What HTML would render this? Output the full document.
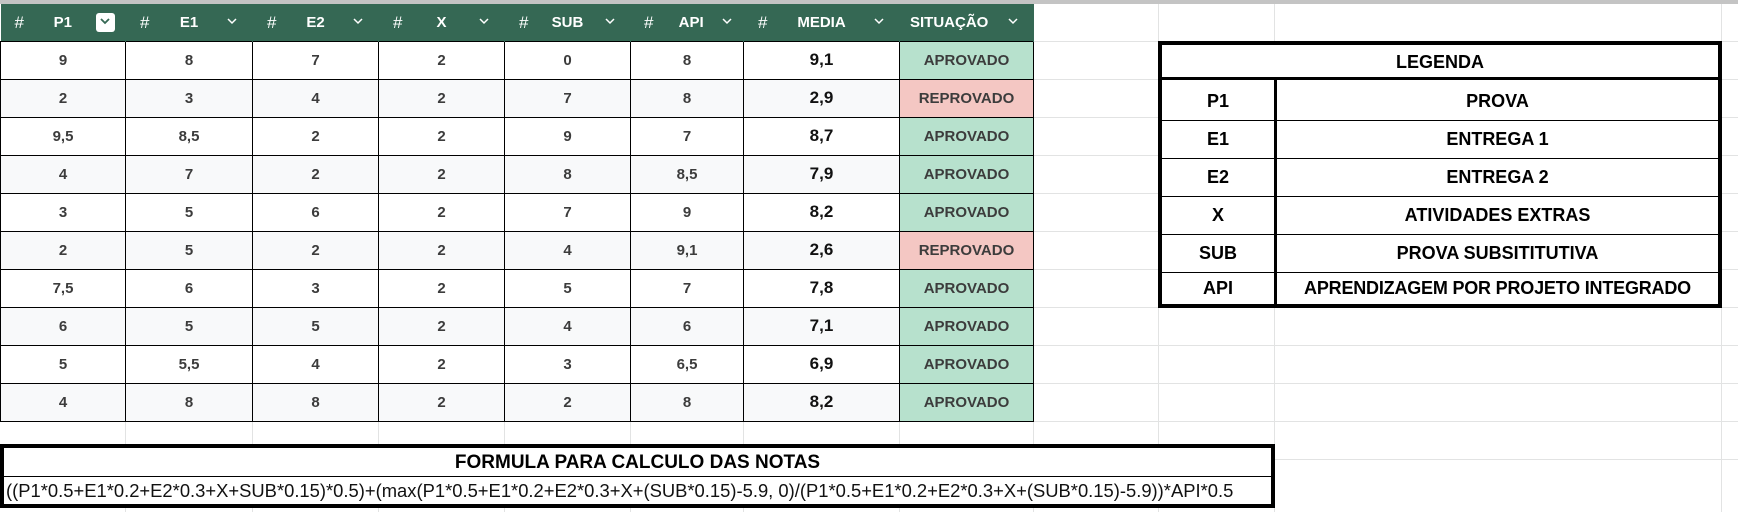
<!DOCTYPE html>
<html><head><meta charset="utf-8"><style>
*{margin:0;padding:0;box-sizing:border-box}
body{width:1738px;height:512px;overflow:hidden;background:#fff;position:relative;font-family:"Liberation Sans",Arial,sans-serif}
.gl{position:absolute;background:#e2e3e3}
.topbar{position:absolute;left:0;top:0;width:1738px;height:4px;background:#c4c4c4}
table.d{position:absolute;left:0;top:4px;border-collapse:collapse;table-layout:fixed}
table.d td{border:1px solid #000;height:38px;text-align:center;font-weight:bold;font-size:15px;color:#3c3c3c}
table.d tr:nth-child(odd) td{background:#f8f9fa}
table.d tr:nth-child(even) td{background:#fff}
table.d tr.h td{background:#356854;color:#fff;height:37px;border:none;border-right:1px solid #356854;position:relative;font-size:15px}
table.d td.a{background:#b7e1cd!important}
table.d td.r{background:#f4c7c3!important}
table.d td.m{font-size:17px;color:#111}
.hs{position:absolute;left:14px;top:9px;font-weight:normal;font-size:17px}
.ch{position:absolute;right:14px;top:12px;width:12px;height:10px}
.box{position:absolute;right:10px;top:9px;width:19px;height:19px;background:#fff;border-radius:3px}
.lg{position:absolute;left:1158px;top:41px;width:564px;height:267px;border:4px solid #000;background:#fff}
.lg div{position:absolute;font-weight:bold;font-size:18px;color:#000;text-align:center}
.fb{position:absolute;left:0;top:444px;width:1275px;height:64px;border:4px solid #000;background:#fff}
</style></head><body>
<div class="topbar"></div>
<div class="gl" style="left:1033px;top:41px;width:705px;height:1px"></div>
<div class="gl" style="left:1033px;top:79px;width:705px;height:1px"></div>
<div class="gl" style="left:1033px;top:117px;width:705px;height:1px"></div>
<div class="gl" style="left:1033px;top:155px;width:705px;height:1px"></div>
<div class="gl" style="left:1033px;top:193px;width:705px;height:1px"></div>
<div class="gl" style="left:1033px;top:231px;width:705px;height:1px"></div>
<div class="gl" style="left:1033px;top:269px;width:705px;height:1px"></div>
<div class="gl" style="left:1033px;top:307px;width:705px;height:1px"></div>
<div class="gl" style="left:1033px;top:345px;width:705px;height:1px"></div>
<div class="gl" style="left:1033px;top:383px;width:705px;height:1px"></div>
<div class="gl" style="left:1033px;top:421px;width:705px;height:1px"></div>
<div class="gl" style="left:1274px;top:459px;width:464px;height:1px"></div>
<div class="gl" style="left:1158px;top:4px;width:1px;height:508px"></div>
<div class="gl" style="left:1274px;top:4px;width:1px;height:508px"></div>
<div class="gl" style="left:1721px;top:4px;width:1px;height:508px"></div>
<div class="gl" style="left:125px;top:420px;width:1px;height:92px"></div>
<div class="gl" style="left:252px;top:420px;width:1px;height:92px"></div>
<div class="gl" style="left:378px;top:420px;width:1px;height:92px"></div>
<div class="gl" style="left:504px;top:420px;width:1px;height:92px"></div>
<div class="gl" style="left:630px;top:420px;width:1px;height:92px"></div>
<div class="gl" style="left:743px;top:420px;width:1px;height:92px"></div>
<div class="gl" style="left:899px;top:420px;width:1px;height:92px"></div>
<div class="gl" style="left:1033px;top:420px;width:1px;height:92px"></div>

<table class="d">
<colgroup><col style="width:125px"><col style="width:127px"><col style="width:126px"><col style="width:126px"><col style="width:126px"><col style="width:113px"><col style="width:156px"><col style="width:134px"></colgroup>
<tr class="h">
<td><span class="hs">#</span>P1<span class="box"></span><svg class="ch" style="right:14px" viewBox="0 0 12 10"><path d="M2 3l4 4 4-4" stroke="#356854" stroke-width="1.8" fill="none"/></svg></td>
<td><span class="hs">#</span>E1<svg class="ch" viewBox="0 0 12 10"><path d="M2 3l4 4 4-4" stroke="#fff" stroke-width="1.5" fill="none"/></svg></td>
<td><span class="hs">#</span>E2<svg class="ch" viewBox="0 0 12 10"><path d="M2 3l4 4 4-4" stroke="#fff" stroke-width="1.5" fill="none"/></svg></td>
<td><span class="hs">#</span>X<svg class="ch" viewBox="0 0 12 10"><path d="M2 3l4 4 4-4" stroke="#fff" stroke-width="1.5" fill="none"/></svg></td>
<td><span class="hs">#</span>SUB<svg class="ch" viewBox="0 0 12 10"><path d="M2 3l4 4 4-4" stroke="#fff" stroke-width="1.5" fill="none"/></svg></td>
<td><span class="hs" style="left:13px">#</span>&nbsp;&nbsp;API<svg class="ch" style="right:10px" viewBox="0 0 12 10"><path d="M2 3l4 4 4-4" stroke="#fff" stroke-width="1.5" fill="none"/></svg></td>
<td><span class="hs">#</span>MEDIA<svg class="ch" viewBox="0 0 12 10"><path d="M2 3l4 4 4-4" stroke="#fff" stroke-width="1.5" fill="none"/></svg></td>
<td style="text-align:left;padding-left:10px">SITUAÇÃO<svg class="ch" viewBox="0 0 12 10"><path d="M2 3l4 4 4-4" stroke="#fff" stroke-width="1.5" fill="none"/></svg></td>
</tr>
<tr><td>9</td><td>8</td><td>7</td><td>2</td><td>0</td><td>8</td><td class="m">9,1</td><td class="a">APROVADO</td></tr>
<tr><td>2</td><td>3</td><td>4</td><td>2</td><td>7</td><td>8</td><td class="m">2,9</td><td class="r">REPROVADO</td></tr>
<tr><td>9,5</td><td>8,5</td><td>2</td><td>2</td><td>9</td><td>7</td><td class="m">8,7</td><td class="a">APROVADO</td></tr>
<tr><td>4</td><td>7</td><td>2</td><td>2</td><td>8</td><td>8,5</td><td class="m">7,9</td><td class="a">APROVADO</td></tr>
<tr><td>3</td><td>5</td><td>6</td><td>2</td><td>7</td><td>9</td><td class="m">8,2</td><td class="a">APROVADO</td></tr>
<tr><td>2</td><td>5</td><td>2</td><td>2</td><td>4</td><td>9,1</td><td class="m">2,6</td><td class="r">REPROVADO</td></tr>
<tr><td>7,5</td><td>6</td><td>3</td><td>2</td><td>5</td><td>7</td><td class="m">7,8</td><td class="a">APROVADO</td></tr>
<tr><td>6</td><td>5</td><td>5</td><td>2</td><td>4</td><td>6</td><td class="m">7,1</td><td class="a">APROVADO</td></tr>
<tr><td>5</td><td>5,5</td><td>4</td><td>2</td><td>3</td><td>6,5</td><td class="m">6,9</td><td class="a">APROVADO</td></tr>
<tr><td>4</td><td>8</td><td>8</td><td>2</td><td>2</td><td>8</td><td class="m">8,2</td><td class="a">APROVADO</td></tr>
</table>

<div class="lg">
<div style="left:0;top:0;width:556px;height:35px;line-height:35px;border-bottom:3px solid #000">LEGENDA</div>
<div style="left:112px;top:35px;width:3px;height:224px;background:#000"></div>
<div style="left:0;top:75px;width:556px;height:1px;background:#000"></div>
<div style="left:0;top:113px;width:556px;height:1px;background:#000"></div>
<div style="left:0;top:151px;width:556px;height:1px;background:#000"></div>
<div style="left:0;top:189px;width:556px;height:1px;background:#000"></div>
<div style="left:0;top:227px;width:556px;height:1px;background:#000"></div>
<div style="left:0;top:38px;width:112px;line-height:37px">P1</div><div style="left:115px;top:38px;width:441px;line-height:37px">PROVA</div>
<div style="left:0;top:76px;width:112px;line-height:37px">E1</div><div style="left:115px;top:76px;width:441px;line-height:37px">ENTREGA 1</div>
<div style="left:0;top:114px;width:112px;line-height:37px">E2</div><div style="left:115px;top:114px;width:441px;line-height:37px">ENTREGA 2</div>
<div style="left:0;top:152px;width:112px;line-height:37px">X</div><div style="left:115px;top:152px;width:441px;line-height:37px">ATIVIDADES EXTRAS</div>
<div style="left:0;top:190px;width:112px;line-height:37px">SUB</div><div style="left:115px;top:190px;width:441px;line-height:37px">PROVA SUBSITITUTIVA</div>
<div style="left:0;top:228px;width:112px;line-height:31px">API</div><div style="left:115px;top:228px;width:441px;line-height:31px;letter-spacing:-0.2px;white-space:nowrap">APRENDIZAGEM POR PROJETO INTEGRADO</div>
</div>

<div class="fb">
<div style="position:absolute;left:0;top:0;width:1267px;height:29px;line-height:29px;text-align:center;font-weight:bold;font-size:19px;border-bottom:1px solid #000">FORMULA PARA CALCULO DAS NOTAS</div>
<div style="position:absolute;left:2px;top:30px;line-height:26px;font-size:18.4px;white-space:nowrap;color:#111">((P1*0.5+E1*0.2+E2*0.3+X+SUB*0.15)*0.5)+(max(P1*0.5+E1*0.2+E2*0.3+X+(SUB*0.15)-5.9, 0)/(P1*0.5+E1*0.2+E2*0.3+X+(SUB*0.15)-5.9))*API*0.5</div>
</div>
</body></html>
